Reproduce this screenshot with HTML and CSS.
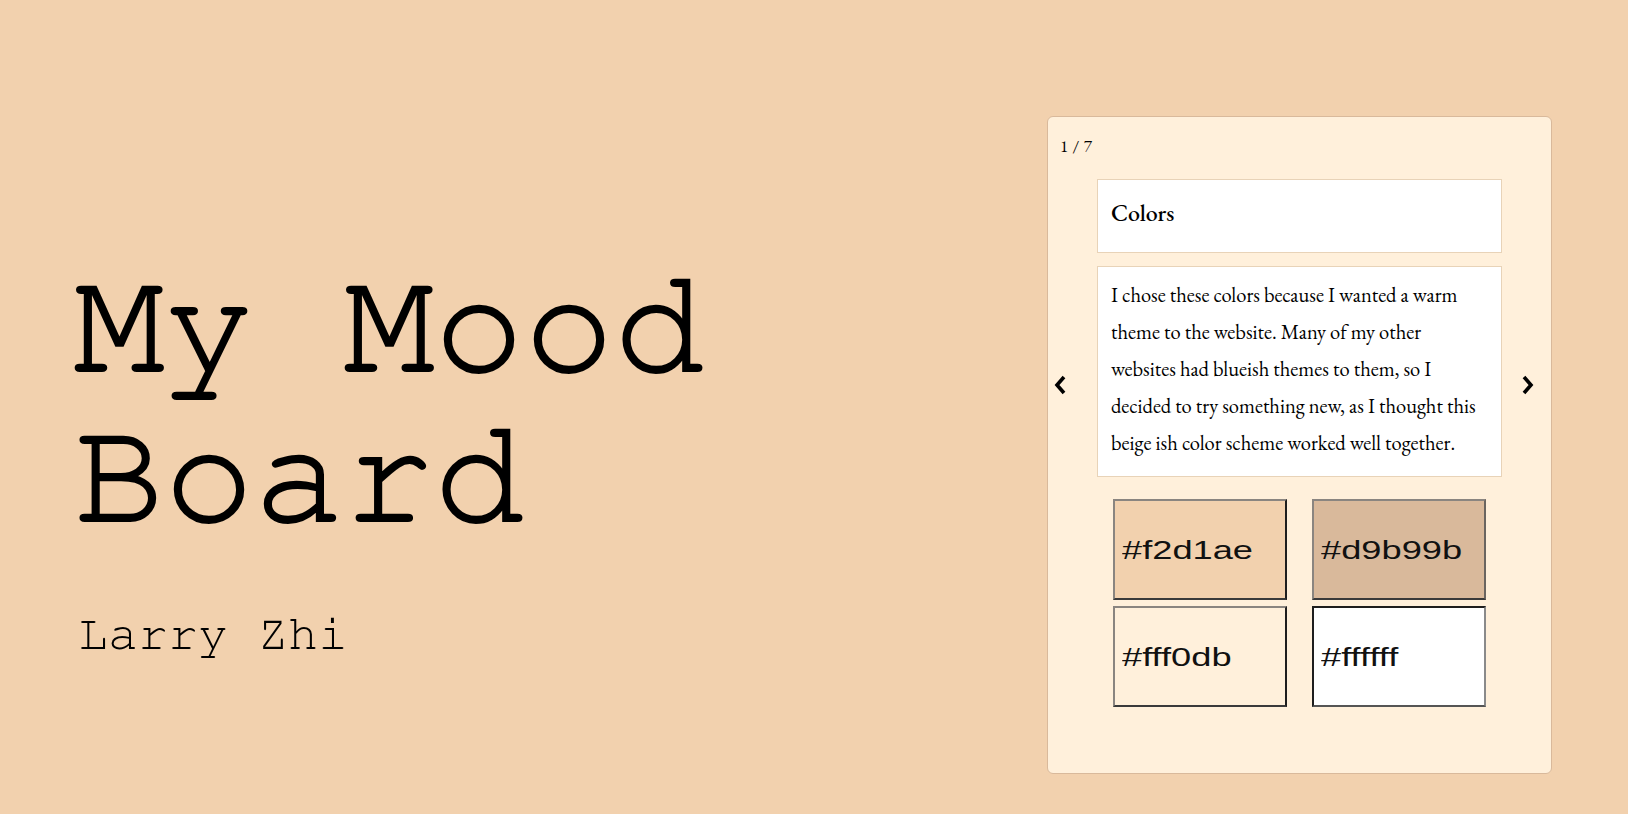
FILE: index.html
```html
<!DOCTYPE html>
<html lang="en">
<head>
<meta charset="utf-8">
<title>My Mood Board</title>
<link rel="stylesheet" href="styles.css">
</head>
<body>
<main class="page">
  <section class="intro">
    <h1 class="title">My Mood Board</h1>
    <p class="author">Larry Zhi</p>
  </section>
  <section class="card">
    <div class="counter">1 / 7</div>
    <button class="arrow arrow-prev" aria-label="Previous">
      <svg width="14" height="20" viewBox="0 0 14 20"><polyline points="11,2 4,10 11,18" fill="none" stroke="#000" stroke-width="3.6"/></svg>
    </button>
    <button class="arrow arrow-next" aria-label="Next">
      <svg width="14" height="20" viewBox="0 0 14 20"><polyline points="3,2 10,10 3,18" fill="none" stroke="#000" stroke-width="3.6"/></svg>
    </button>
    <div class="slide">
      <div class="slide-head"><h3>Colors</h3></div>
      <div class="slide-body">
        <p>I chose these colors because I wanted a warm theme to the website. Many of my other websites had blueish themes to them, so I decided to try something new, as I thought this beige ish color scheme worked well together.</p>
      </div>
      <div class="swatches">
        <div class="swatch sw-1"><span>#f2d1ae</span></div>
        <div class="swatch sw-2"><span>#d9b99b</span></div>
        <div class="swatch sw-3"><span>#fff0db</span></div>
        <div class="swatch sw-4"><span>#ffffff</span></div>
      </div>
    </div>
  </section>
</main>
</body>
</html>
```

FILE: styles.css
```css
* { box-sizing: border-box; }

html, body {
  margin: 0;
  padding: 0;
}

body {
  background: #f2d1ae;
  color: #000;
  font-family: "EB Garamond", "Liberation Serif", serif;
}

.page {
  display: flex;
  justify-content: space-between;
  align-items: flex-start;
  height: 814px;
  overflow: hidden;
}

.intro {
  padding: 251px 0 0 74px;
}

.title {
  margin: 0;
  width: 760px;
  font-family: "FreeMono", "Liberation Mono", monospace;
  font-weight: normal;
  font-size: 150px;
  line-height: 150px;
  -webkit-text-stroke: 2px #000;
}

.author {
  margin: 55px 0 0 4px;
  font-family: "FreeMono", "Liberation Mono", monospace;
  font-size: 50px;
  line-height: 56px;
}

.card {
  position: relative;
  width: 505px;
  height: 658px;
  margin: 116px 76px 0 0;
  background: #fff0db;
  border: 1px solid #d9b99b;
  border-radius: 6px;
  padding: 19px 0 0 0;
}

.counter {
  padding-left: 12px;
  font-size: 17px;
  line-height: 20px;
  word-spacing: 1px;
}

.arrow {
  position: absolute;
  top: 258px;
  padding: 0;
  border: 0;
  background: none;
  width: 14px;
  height: 20px;
  cursor: pointer;
}
.arrow svg { display: block; }
.arrow-prev { left: 5px; }
.arrow-next { right: 16px; }

.slide {
  width: 405px;
  margin: 23px 0 0 49px;
}

.slide-head {
  height: 74px;
  background: #fff;
  border: 1px solid #e8d3b8;
  padding: 19px 13px 0;
}

.slide-head h3 {
  margin: 0;
  font-size: 24px;
  line-height: 28px;
  font-weight: 500;
}

.slide-body {
  margin-top: 13px;
  height: 211px;
  background: #fff;
  border: 1px solid #e8d3b8;
  padding: 9px 13px 0;
}

.slide-body p {
  margin: 0;
  font-size: 20.5px;
  line-height: 37px;
}

.swatches {
  margin-top: 22px;
  padding: 0 16px;
  display: grid;
  grid-template-columns: 174px 174px;
  grid-auto-rows: 101px;
  column-gap: 25px;
  row-gap: 6px;
}

.swatch {
  display: flex;
  align-items: center;
  padding-left: 7px;
  border: 2px solid;
  border-color: #8a8580 #1e1e1e #3a3a3a #8a8580;
  overflow: hidden;
}

.swatch span {
  display: inline-block;
  font-family: "Liberation Sans", Arial, sans-serif;
  font-size: 25px;
  line-height: 28px;
  color: #111;
  transform: scaleX(1.45);
  transform-origin: left center;
}

.sw-1 { background: #f2d1ae; }
.sw-2 { background: #d9b99b; border-color: #8a8580 #6a6560 #3a3a3a #8a8580; }
.sw-3 { background: #fff0db; }
.sw-4 { background: #ffffff; border-color: #1e1e1e #8a8a8a #555 #1e1e1e; }
```
